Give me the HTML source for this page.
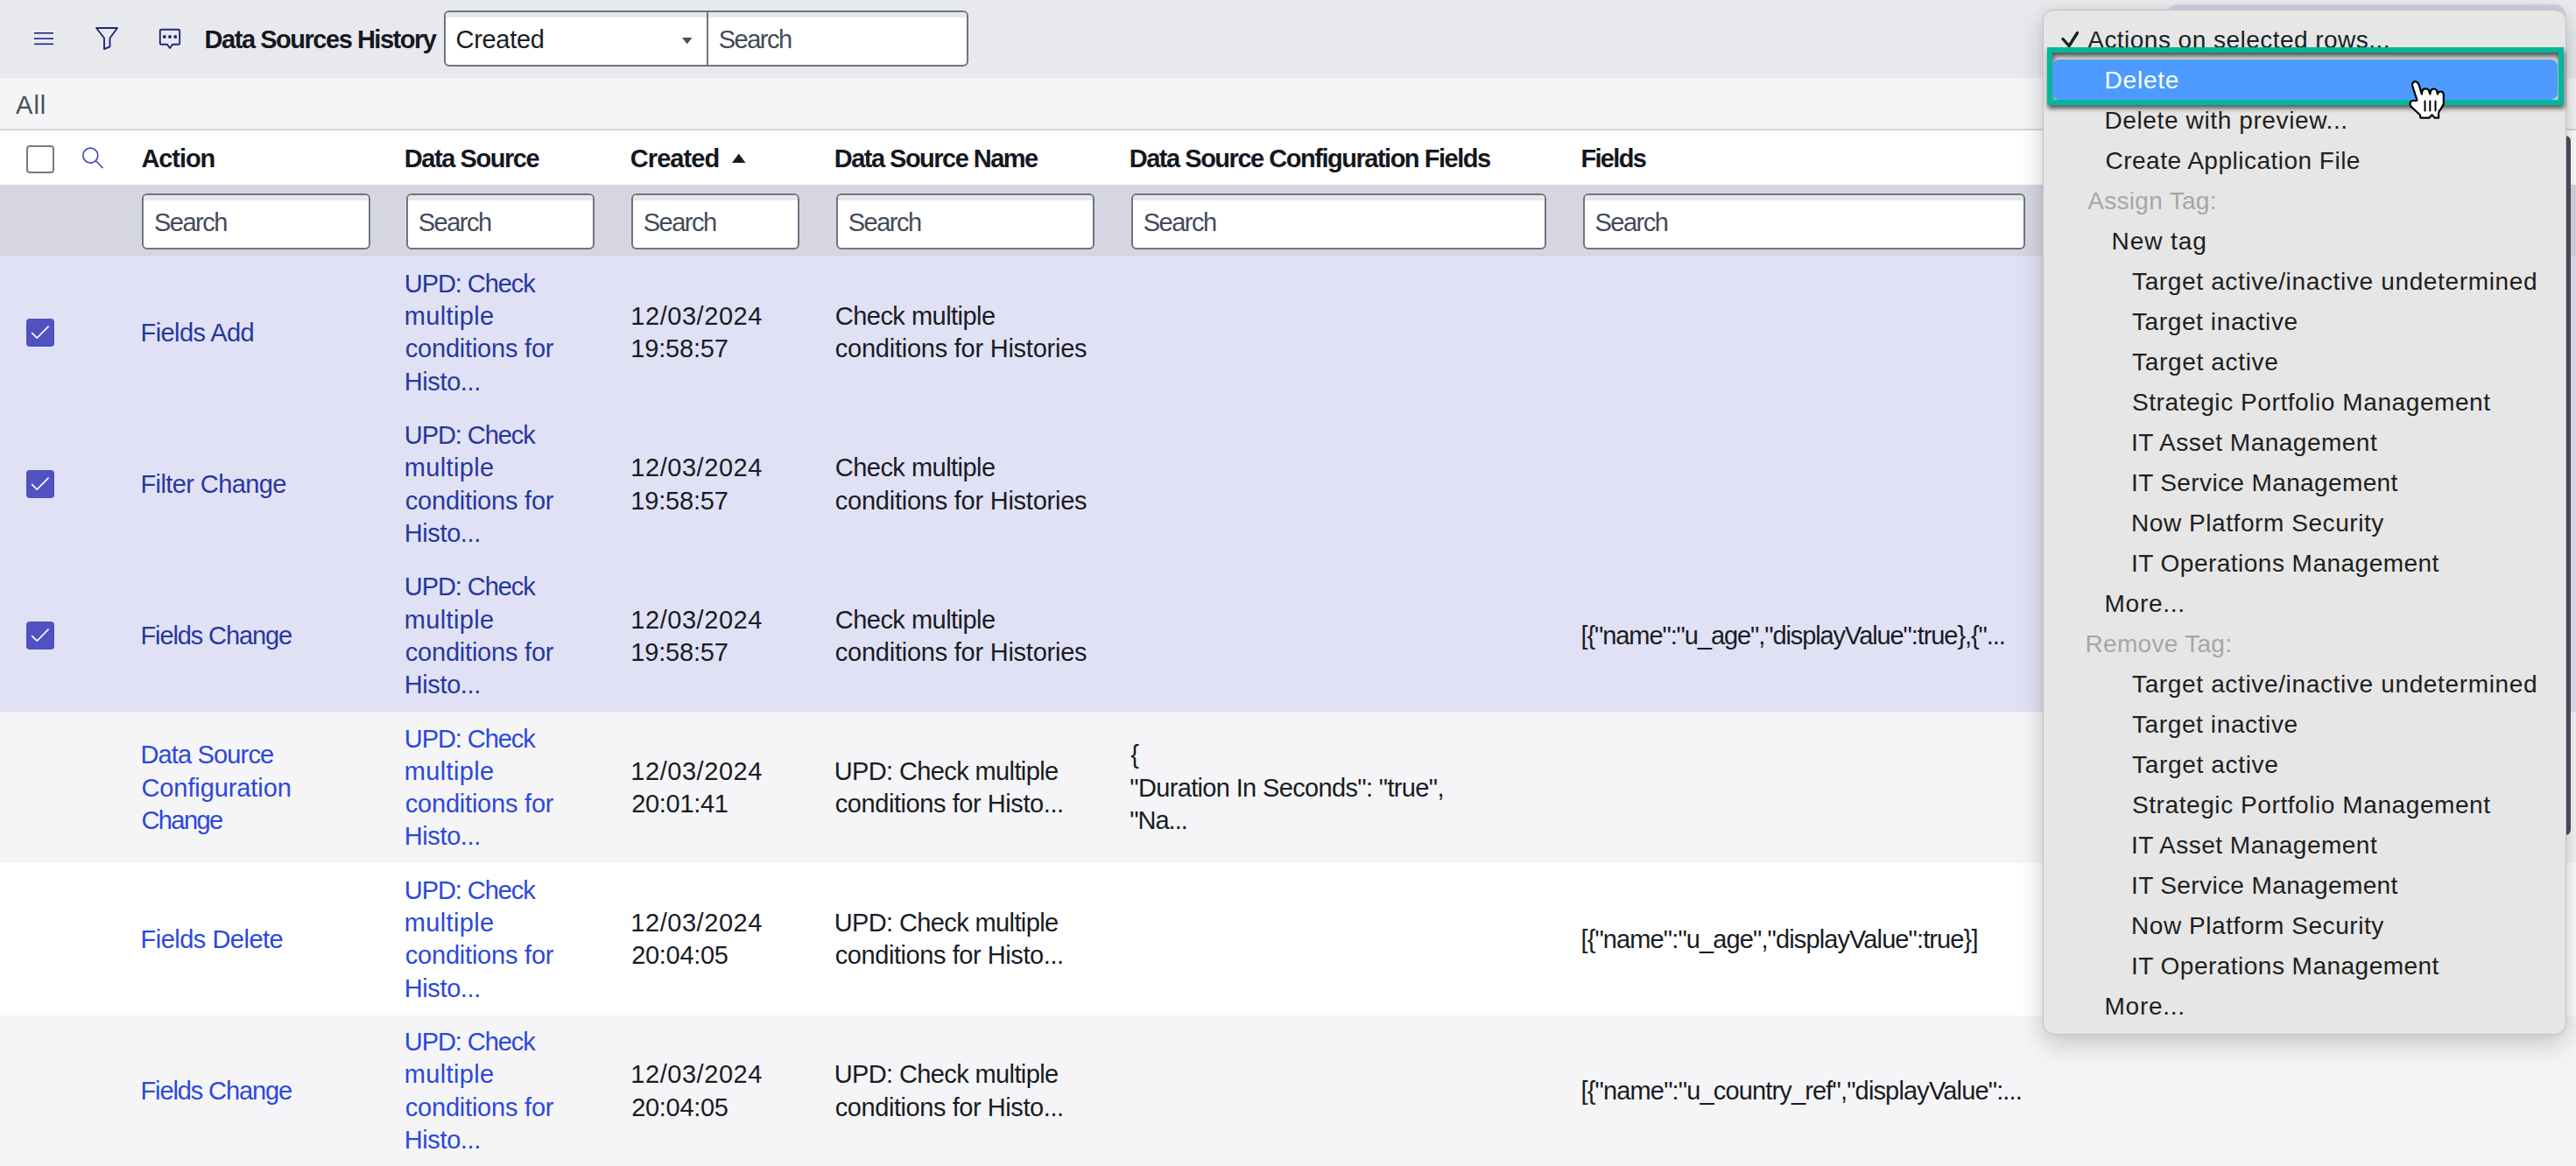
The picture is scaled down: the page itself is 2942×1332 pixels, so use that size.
<!DOCTYPE html><html><head><meta charset="utf-8"><style>
*{box-sizing:border-box;margin:0;padding:0}
html,body{width:2942px;height:1332px;overflow:hidden;background:#fff;font-family:"Liberation Sans",sans-serif;}
.a{position:absolute;white-space:nowrap}
.t{font-size:29px;line-height:37.25px;color:#181c24}
.b{font-weight:bold;color:#15181f}
.lk{color:#2c48dc}
.lks{color:#26389f}
.ph{color:#434b59}
.inp{position:absolute;top:221px;height:64px;border:2px solid #6d7484;border-radius:6px;background:#fff;overflow:hidden}
.inp:before{content:"";position:absolute;left:0;right:0;top:0;height:6px;background:#e6e8e8}
.mi{font-size:28px;line-height:37.25px;color:#202020}
.mg{color:#a6a6a6}
.mw{color:#fff}
</style></head><body>
<div class="a" style="left:0;top:0;width:2942px;height:89px;background:#e8e9ed"></div>
<div class="a" style="left:0;top:89px;width:2942px;height:58px;background:#f5f5f7"></div>
<div class="a" style="left:0;top:147px;width:2942px;height:2px;background:#d4d4e0"></div>
<div class="a" style="left:0;top:149px;width:2942px;height:62px;background:#fff"></div>
<div class="a" style="left:0;top:211px;width:2942px;height:82px;background:#d6d6e0"></div>
<div class="a" style="left:0;top:293px;width:2942px;height:173.75px;background:#e1e1f5"></div>
<div class="a" style="left:0;top:466.25px;width:2942px;height:173.75px;background:#e1e1f5"></div>
<div class="a" style="left:0;top:639.5px;width:2942px;height:173.5px;background:#e1e1f5"></div>
<div class="a" style="left:0;top:812.5px;width:2942px;height:173.75px;background:#f5f5f7"></div>
<div class="a" style="left:0;top:985.75px;width:2942px;height:174.5px;background:#ffffff"></div>
<div class="a" style="left:0;top:1159.75px;width:2942px;height:173.75px;background:#f5f5f7"></div>
<svg class="a" style="left:0;top:0" width="240" height="89" viewBox="0 0 240 89">
<g fill="#23267e">
<rect x="39" y="37" width="22" height="1.6"/>
<rect x="39" y="43.3" width="22" height="1.6"/>
<rect x="39" y="49.5" width="22" height="1.6"/>
</g>
<path d="M110 32 L134 32 L125.5 43.5 L125.5 53.3 L119 56 L119 43.5 Z" fill="none" stroke="#23267e" stroke-width="1.9" stroke-linejoin="round"/>
<path d="M184.5 33.8 H203.5 Q205.2 33.8 205.2 35.5 V49 Q205.2 50.7 203.5 50.7 H197 L194 55 L191 50.7 H184.5 Q182.8 50.7 182.8 49 V35.5 Q182.8 33.8 184.5 33.8 Z" fill="none" stroke="#23267e" stroke-width="1.9" stroke-linejoin="round"/>
<circle cx="187.8" cy="42" r="1.95" fill="#23267e"/><circle cx="194" cy="42" r="1.95" fill="#23267e"/><circle cx="200.2" cy="42" r="1.95" fill="#23267e"/>
</svg>
<div class="a t b" style="left:233.6px;top:27.33px;letter-spacing:-1.47px">Data Sources History</div>
<div class="a" style="left:507px;top:12px;width:599px;height:64px;border:2px solid #6d7484;border-radius:6px;background:#fff;overflow:hidden"><div class="a" style="left:0;right:0;top:0;height:6px;background:#e6e8e8"></div><div class="a" style="left:298px;top:0;width:2px;height:60px;background:#6d7484"></div></div>
<div class="a t" style="left:520.5px;top:27.33px;letter-spacing:-0.29px;color:#1a1d24">Created</div>
<svg class="a" style="left:779px;top:43px" width="12" height="8" viewBox="0 0 12 8"><path d="M0 0 H11.5 L5.75 7.3 Z" fill="#454c5a"/></svg>
<div class="a t ph" style="left:820.8px;top:27.33px;letter-spacing:-1.52px">Search</div>
<div class="a t" style="left:18.1px;top:102.33px;letter-spacing:0.95px;color:#464e5c">All</div>
<div class="a" style="left:30px;top:166px;width:32px;height:32px;border:2px solid #737b8a;border-radius:4px;background:#fff"></div>
<svg class="a" style="left:90px;top:165px" width="32" height="32" viewBox="90 165 32 32"><circle cx="103.3" cy="177.6" r="8.5" fill="none" stroke="#3f46b8" stroke-width="1.6"/><path d="M109.5 183.8 L117.5 192" stroke="#3f46b8" stroke-width="1.6"/></svg>
<div class="a t b" style="left:161.5px;top:163.33px;letter-spacing:-1.10px">Action</div>
<div class="a t b" style="left:461.75px;top:163.33px;letter-spacing:-1.43px">Data Source</div>
<div class="a t b" style="left:719.75px;top:163.33px;letter-spacing:-0.92px">Created</div>
<div class="a t b" style="left:952.75px;top:163.33px;letter-spacing:-1.52px">Data Source Name</div>
<div class="a t b" style="left:1289.75px;top:163.33px;letter-spacing:-1.48px">Data Source Configuration Fields</div>
<div class="a t b" style="left:1805.5px;top:163.33px;letter-spacing:-1.70px">Fields</div>
<svg class="a" style="left:836px;top:175px" width="16" height="12" viewBox="0 0 16 12"><path d="M0 11 L7.75 0.5 L15.5 11 Z" fill="#181c24"/></svg>
<div class="inp" style="left:162px;width:260.5px"></div>
<div class="a t ph" style="left:176px;top:236.23px;letter-spacing:-1.52px">Search</div>
<div class="inp" style="left:463.75px;width:215.25px"></div>
<div class="a t ph" style="left:477.75px;top:236.23px;letter-spacing:-1.52px">Search</div>
<div class="inp" style="left:720.75px;width:192.5px"></div>
<div class="a t ph" style="left:734.75px;top:236.23px;letter-spacing:-1.52px">Search</div>
<div class="inp" style="left:954.75px;width:295.5px"></div>
<div class="a t ph" style="left:968.75px;top:236.23px;letter-spacing:-1.52px">Search</div>
<div class="inp" style="left:1291.75px;width:474.5px"></div>
<div class="a t ph" style="left:1305.75px;top:236.23px;letter-spacing:-1.52px">Search</div>
<div class="inp" style="left:1807.5px;width:505.75px"></div>
<div class="a t ph" style="left:1821.5px;top:236.23px;letter-spacing:-1.52px">Search</div>
<svg class="a" style="left:30px;top:363.62px" width="32" height="32" viewBox="0 0 32 32"><rect x="0" y="0" width="32" height="32" rx="4" fill="#4f52bf"/><path d="M6.2 16.2 L12.3 22 L25.6 8.7" fill="none" stroke="#fff" stroke-width="1.7"/></svg>
<div class="a t lks" style="left:160.5px;top:361.85px;letter-spacing:-0.58px">Fields Add</div>
<div class="a t lks" style="left:461.75px;top:305.98px;letter-spacing:-1.06px">UPD: Check</div>
<div class="a t lks" style="left:461.75px;top:343.23px;letter-spacing:0.36px">multiple</div>
<div class="a t lks" style="left:462.75px;top:380.48px;letter-spacing:-0.21px">conditions for</div>
<div class="a t lks" style="left:461.75px;top:417.73px;letter-spacing:-0.39px">Histo...</div>
<div class="a t" style="left:720.25px;top:343.23px;letter-spacing:0.56px">12/03/2024</div>
<div class="a t" style="left:720.25px;top:380.48px;letter-spacing:-0.18px">19:58:57</div>
<div class="a t" style="left:953.75px;top:343.23px;letter-spacing:-0.52px">Check multiple</div>
<div class="a t" style="left:953.75px;top:380.48px;letter-spacing:-0.24px">conditions for Histories</div>
<svg class="a" style="left:30px;top:536.88px" width="32" height="32" viewBox="0 0 32 32"><rect x="0" y="0" width="32" height="32" rx="4" fill="#4f52bf"/><path d="M6.2 16.2 L12.3 22 L25.6 8.7" fill="none" stroke="#fff" stroke-width="1.7"/></svg>
<div class="a t lks" style="left:160.5px;top:535.1px;letter-spacing:-0.60px">Filter Change</div>
<div class="a t lks" style="left:461.75px;top:479.23px;letter-spacing:-1.06px">UPD: Check</div>
<div class="a t lks" style="left:461.75px;top:516.48px;letter-spacing:0.36px">multiple</div>
<div class="a t lks" style="left:462.75px;top:553.73px;letter-spacing:-0.21px">conditions for</div>
<div class="a t lks" style="left:461.75px;top:590.98px;letter-spacing:-0.39px">Histo...</div>
<div class="a t" style="left:720.25px;top:516.48px;letter-spacing:0.56px">12/03/2024</div>
<div class="a t" style="left:720.25px;top:553.73px;letter-spacing:-0.18px">19:58:57</div>
<div class="a t" style="left:953.75px;top:516.48px;letter-spacing:-0.52px">Check multiple</div>
<div class="a t" style="left:953.75px;top:553.73px;letter-spacing:-0.24px">conditions for Histories</div>
<svg class="a" style="left:30px;top:710.12px" width="32" height="32" viewBox="0 0 32 32"><rect x="0" y="0" width="32" height="32" rx="4" fill="#4f52bf"/><path d="M6.2 16.2 L12.3 22 L25.6 8.7" fill="none" stroke="#fff" stroke-width="1.7"/></svg>
<div class="a t lks" style="left:160.5px;top:708.35px;letter-spacing:-1.12px">Fields Change</div>
<div class="a t lks" style="left:461.75px;top:652.48px;letter-spacing:-1.06px">UPD: Check</div>
<div class="a t lks" style="left:461.75px;top:689.73px;letter-spacing:0.36px">multiple</div>
<div class="a t lks" style="left:462.75px;top:726.98px;letter-spacing:-0.21px">conditions for</div>
<div class="a t lks" style="left:461.75px;top:764.23px;letter-spacing:-0.39px">Histo...</div>
<div class="a t" style="left:720.25px;top:689.73px;letter-spacing:0.56px">12/03/2024</div>
<div class="a t" style="left:720.25px;top:726.98px;letter-spacing:-0.18px">19:58:57</div>
<div class="a t" style="left:953.75px;top:689.73px;letter-spacing:-0.52px">Check multiple</div>
<div class="a t" style="left:953.75px;top:726.98px;letter-spacing:-0.24px">conditions for Histories</div>
<div class="a t" style="left:1805.5px;top:708.35px;letter-spacing:-1.09px">[{&quot;name&quot;:&quot;u_age&quot;,&quot;displayValue&quot;:true},{&quot;...</div>
<div class="a t lk" style="left:160.5px;top:844.35px;letter-spacing:-0.85px">Data Source</div>
<div class="a t lk" style="left:161.5px;top:881.6px;letter-spacing:-0.10px">Configuration</div>
<div class="a t lk" style="left:161.5px;top:918.85px;letter-spacing:-1.60px">Change</div>
<div class="a t lk" style="left:461.75px;top:825.73px;letter-spacing:-1.06px">UPD: Check</div>
<div class="a t lk" style="left:461.75px;top:862.98px;letter-spacing:0.36px">multiple</div>
<div class="a t lk" style="left:462.75px;top:900.23px;letter-spacing:-0.21px">conditions for</div>
<div class="a t lk" style="left:461.75px;top:937.48px;letter-spacing:-0.39px">Histo...</div>
<div class="a t" style="left:720.25px;top:862.98px;letter-spacing:0.56px">12/03/2024</div>
<div class="a t" style="left:721.25px;top:900.23px;letter-spacing:-0.32px">20:01:41</div>
<div class="a t" style="left:952.75px;top:862.98px;letter-spacing:-0.62px">UPD: Check multiple</div>
<div class="a t" style="left:953.75px;top:900.23px;letter-spacing:-0.43px">conditions for Histo...</div>
<div class="a t" style="left:1291.25px;top:844.35px;letter-spacing:0.00px">{</div>
<div class="a t" style="left:1290.25px;top:881.6px;letter-spacing:-0.65px">&quot;Duration In Seconds&quot;: &quot;true&quot;,</div>
<div class="a t" style="left:1290.25px;top:918.85px;letter-spacing:-1.00px">&quot;Na...</div>
<div class="a t lk" style="left:160.5px;top:1054.85px;letter-spacing:-0.50px">Fields Delete</div>
<div class="a t lk" style="left:461.75px;top:998.98px;letter-spacing:-1.06px">UPD: Check</div>
<div class="a t lk" style="left:461.75px;top:1036.23px;letter-spacing:0.36px">multiple</div>
<div class="a t lk" style="left:462.75px;top:1073.48px;letter-spacing:-0.21px">conditions for</div>
<div class="a t lk" style="left:461.75px;top:1110.73px;letter-spacing:-0.39px">Histo...</div>
<div class="a t" style="left:720.25px;top:1036.23px;letter-spacing:0.56px">12/03/2024</div>
<div class="a t" style="left:721.25px;top:1073.48px;letter-spacing:-0.32px">20:04:05</div>
<div class="a t" style="left:952.75px;top:1036.23px;letter-spacing:-0.62px">UPD: Check multiple</div>
<div class="a t" style="left:953.75px;top:1073.48px;letter-spacing:-0.43px">conditions for Histo...</div>
<div class="a t" style="left:1805.5px;top:1054.85px;letter-spacing:-0.89px">[{&quot;name&quot;:&quot;u_age&quot;,&quot;displayValue&quot;:true}]</div>
<div class="a t lk" style="left:160.5px;top:1228.1px;letter-spacing:-1.12px">Fields Change</div>
<div class="a t lk" style="left:461.75px;top:1172.23px;letter-spacing:-1.06px">UPD: Check</div>
<div class="a t lk" style="left:461.75px;top:1209.48px;letter-spacing:0.36px">multiple</div>
<div class="a t lk" style="left:462.75px;top:1246.73px;letter-spacing:-0.21px">conditions for</div>
<div class="a t lk" style="left:461.75px;top:1283.98px;letter-spacing:-0.39px">Histo...</div>
<div class="a t" style="left:720.25px;top:1209.48px;letter-spacing:0.56px">12/03/2024</div>
<div class="a t" style="left:721.25px;top:1246.73px;letter-spacing:-0.32px">20:04:05</div>
<div class="a t" style="left:952.75px;top:1209.48px;letter-spacing:-0.62px">UPD: Check multiple</div>
<div class="a t" style="left:953.75px;top:1246.73px;letter-spacing:-0.43px">conditions for Histo...</div>
<div class="a t" style="left:1805.5px;top:1228.1px;letter-spacing:-0.85px">[{&quot;name&quot;:&quot;u_country_ref&quot;,&quot;displayValue&quot;:...</div>
<div class="a" style="left:2475px;top:4.5px;width:455px;height:60px;border-radius:12px;background:#ced1e3"></div>
<div class="a" style="left:2924px;top:155px;width:12px;height:799px;border-radius:6px;background:#52505f"></div>
<div class="a" style="left:2332.75px;top:11.25px;width:597.75px;height:1170.5px;border-radius:13px;background:#e6e6e6;border:1px solid #c2c2c2;box-shadow:0 12px 30px rgba(0,0,0,0.18),0 0 12px rgba(0,0,0,0.06)"></div>
<svg class="a" style="left:2350px;top:34px" width="30" height="22" viewBox="0 0 30 22"><path d="M6 10.5 L13 18.5 L22.5 3.5" fill="none" stroke="#202020" stroke-width="3.4" stroke-linecap="round" stroke-linejoin="round"/></svg>
<div class="a mi" style="left:2384.25px;top:27.07px;letter-spacing:0.47px">Actions on selected rows...</div>
<div class="a" style="left:2338px;top:54px;width:590px;height:66px;border:6px solid #00b89c;box-shadow:1px 4px 5px rgba(0,0,0,0.6), inset 1px 4px 6px rgba(0,0,0,0.7)"></div>
<div class="a" style="left:2344px;top:68px;width:576.5px;height:46px;border-radius:8px;background:#4d9bff"></div>
<div class="a mi mw" style="left:2403.5px;top:73.07px;letter-spacing:0.80px">Delete</div>
<div class="a mi" style="left:2403.5px;top:119.07px;letter-spacing:0.62px">Delete with preview...</div>
<div class="a mi" style="left:2404.5px;top:165.07px;letter-spacing:0.49px">Create Application File</div>
<div class="a mi mg" style="left:2384.25px;top:211.07px;letter-spacing:0.30px">Assign Tag:</div>
<div class="a mi" style="left:2411.5px;top:257.07px;letter-spacing:0.92px">New tag</div>
<div class="a mi" style="left:2435px;top:303.07px;letter-spacing:0.65px">Target active/inactive undetermined</div>
<div class="a mi" style="left:2435px;top:349.07px;letter-spacing:0.61px">Target inactive</div>
<div class="a mi" style="left:2435px;top:395.07px;letter-spacing:0.67px">Target active</div>
<div class="a mi" style="left:2435px;top:441.07px;letter-spacing:0.58px">Strategic Portfolio Management</div>
<div class="a mi" style="left:2434px;top:487.07px;letter-spacing:0.49px">IT Asset Management</div>
<div class="a mi" style="left:2434px;top:533.07px;letter-spacing:0.38px">IT Service Management</div>
<div class="a mi" style="left:2434px;top:579.07px;letter-spacing:0.57px">Now Platform Security</div>
<div class="a mi" style="left:2434px;top:625.07px;letter-spacing:0.48px">IT Operations Management</div>
<div class="a mi" style="left:2403.5px;top:671.07px;letter-spacing:0.75px">More...</div>
<div class="a mi mg" style="left:2381.5px;top:717.07px;letter-spacing:0.30px">Remove Tag:</div>
<div class="a mi" style="left:2435px;top:763.07px;letter-spacing:0.65px">Target active/inactive undetermined</div>
<div class="a mi" style="left:2435px;top:809.07px;letter-spacing:0.61px">Target inactive</div>
<div class="a mi" style="left:2435px;top:855.07px;letter-spacing:0.67px">Target active</div>
<div class="a mi" style="left:2435px;top:901.07px;letter-spacing:0.58px">Strategic Portfolio Management</div>
<div class="a mi" style="left:2434px;top:947.07px;letter-spacing:0.49px">IT Asset Management</div>
<div class="a mi" style="left:2434px;top:993.07px;letter-spacing:0.38px">IT Service Management</div>
<div class="a mi" style="left:2434px;top:1039.07px;letter-spacing:0.57px">Now Platform Security</div>
<div class="a mi" style="left:2434px;top:1085.07px;letter-spacing:0.48px">IT Operations Management</div>
<div class="a mi" style="left:2403.5px;top:1131.07px;letter-spacing:0.75px">More...</div>
<svg class="a" style="left:2740px;top:85px" width="60" height="57" viewBox="0 0 60 57">
<path d="M20.5 29.5 L15.2 13 C14.2 9.5 17 7.8 19.2 8.3 C21.2 8.8 22.3 10.5 23 13 L25.8 22.5 L26.3 19.5 C26.8 16 31.5 15.5 33.5 17.5 L35.3 22.5 L35.8 19.5 C36.5 16 41.5 15.5 43 18.5 L44 22.5 L44.8 20.8 C46 18.8 50.5 19 50.8 22.5 L50.8 33 C50.8 37 46 40 45 44 L45.2 49.6 L40.5 49.6 L37.5 46.2 L34.5 49.6 L24.5 49.6 L23.8 46.3 L14 37 C11.5 34.5 12 30.5 15.5 30 C17.5 29.8 19.5 30.5 20.5 29.5 Z" fill="#fff" stroke="#000" stroke-width="2.2" stroke-linejoin="round"/>
<path d="M29.5 30.5 V41.5 M35.3 30.5 V41.5 M41.5 30.5 V41.5" stroke="#000" stroke-width="2" stroke-linecap="round"/>
</svg>
</body></html>
